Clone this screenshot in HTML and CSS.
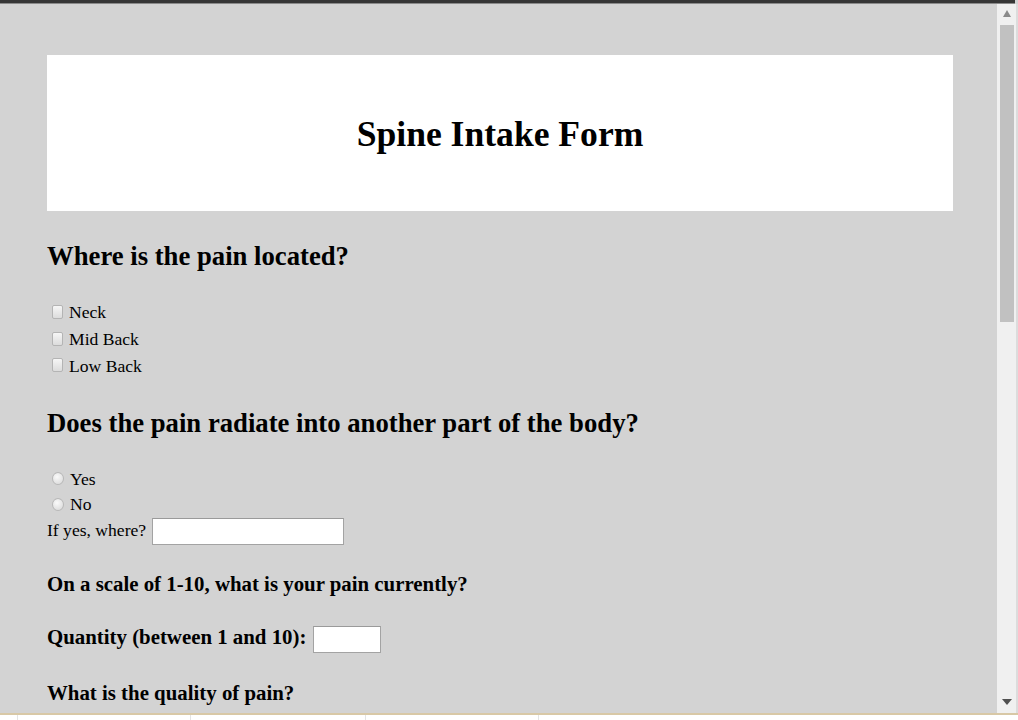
FILE: index.html
```html
<!DOCTYPE html>
<html>
<head>
<meta charset="utf-8">
<title>Spine Intake Form</title>
<link rel="stylesheet" href="styles.css">
</head>
<body>
<div class="frame">
  <div class="topbar"></div>
  <div class="viewport">
    <main class="content">
      <header class="banner"><h1>Spine Intake Form</h1></header>

      <h2 class="q q-first">Where is the pain located?</h2>
      <div class="options">
        <label class="opt"><input type="checkbox" class="box">Neck</label>
        <label class="opt"><input type="checkbox" class="box">Mid Back</label>
        <label class="opt"><input type="checkbox" class="box">Low Back</label>
      </div>

      <h2 class="q">Does the pain radiate into another part of the body?</h2>
      <div class="options tight">
        <label class="opt"><input type="radio" name="rad" class="round">Yes</label>
        <label class="opt"><input type="radio" name="rad" class="round">No</label>
        <label class="opt inline">If yes, where? <input type="text" class="field wide"></label>
      </div>

      <p class="label">On a scale of 1-10, what is your pain currently?</p>
      <label class="label row">Quantity (between 1 and 10): <input type="text" class="field small"></label>
      <p class="label">What is the quality of pain?</p>
    </main>
    <div class="scrollbar">
      <div class="arrow up"></div>
      <div class="thumb"></div>
      <div class="rest"></div>
      <div class="arrow down"></div>
    </div>
    <div class="edge"></div>
  </div>
  <div class="bottom">
    <span class="seg s1"></span><span class="seg s2"></span><span class="seg s3"></span><span class="seg s4"></span><span class="seg s5"></span>
  </div>
</div>
</body>
</html>
```

FILE: styles.css
```css
html, body {
  margin: 0;
  padding: 0;
  height: 720px;
  overflow: hidden;
  background: #d3d3d3;
  font-family: "Liberation Serif", "Times New Roman", serif;
  color: #000;
}

.frame {
  display: flex;
  flex-direction: column;
  height: 720px;
}

.topbar {
  height: 3px;
  background: #363636;
  border-bottom: 1px solid #8a8a8a;
  margin-right: 3px;
}

.viewport {
  flex: 1;
  display: flex;
  min-height: 0;
}

.content {
  flex: 1;
  overflow: hidden;
  padding: 0 44px 0 47px;
}

.banner {
  margin-top: 51px;
  height: 156px;
  background: #fff;
  display: flex;
  align-items: center;
  justify-content: center;
}

.banner h1 {
  margin: 0;
  font-size: 35.6px;
  line-height: 40px;
  font-weight: bold;
  padding-top: 2px;
}

.q {
  margin: 28px 0 0;
  font-size: 26.7px;
  line-height: 30px;
  font-weight: bold;
}

.q-first {
  margin-top: 30px;
}

.options {
  margin-top: 28.5px;
  display: flex;
  flex-direction: column;
  font-size: 17.6px;
}

.opt {
  display: flex;
  align-items: center;
  line-height: 27px;
  height: 26.8px;
  white-space: pre;
}

.tight {
  margin-top: 29px;
}

.tight .opt {
  line-height: 25.5px;
  height: 25.5px;
}

.tight .opt.inline {
  align-items: flex-start;
  height: 26.5px;
  margin-top: 0.5px;
}

.box {
  appearance: none;
  -webkit-appearance: none;
  margin: 0 6px 2px 5px;
  width: 11px;
  height: 14px;
  border: 1px solid #b4b4b4;
  border-radius: 2px;
  background: linear-gradient(#f6f6f6, #dcdcdc);
  box-sizing: border-box;
}

.round {
  appearance: none;
  -webkit-appearance: none;
  margin: 0 6px 2px 5px;
  width: 12px;
  height: 13px;
  border: 1px solid #b8b8b8;
  border-radius: 50%;
  background: radial-gradient(circle at 40% 35%, #fafafa, #d6d6d6);
  box-sizing: border-box;
}

.field {
  margin: 0 0 0 1px;
  height: 26.5px;
  box-sizing: border-box;
  border: 1px solid #a3a3a3;
  border-top-color: #9a9a9a;
  background: #fff;
  padding: 0 3px;
  font-family: "Liberation Sans", Arial, sans-serif;
  font-size: 13px;
}

.wide {
  width: 192px;
}

.small {
  width: 68.5px;
  height: 27px;
  margin-left: 1px;
}

.label {
  margin: 27.5px 0 0;
  font-size: 20.85px;
  line-height: 24px;
  font-weight: bold;
}

.row {
  display: flex;
  align-items: flex-start;
  margin-top: 28.5px;
  white-space: pre;
}

.row .field {
  margin-top: 1.5px;
}

.row + .label {
  margin-top: 27.5px;
}

.scrollbar {
  width: 19px;
  background: #f0f0f0;
  display: flex;
  flex-direction: column;
  align-items: center;
}

.arrow {
  width: 0;
  height: 0;
  border-left: 5px solid transparent;
  border-right: 5px solid transparent;
}

.arrow.up {
  margin-top: 6px;
  border-bottom: 7px solid #8a8a8a;
  border-left-width: 4px;
  border-right-width: 4px;
}

.thumb {
  margin-top: 8px;
  width: 14px;
  height: 297px;
  background: #c1c1c1;
}

.rest {
  flex: 1;
}

.arrow.down {
  margin-bottom: 8px;
  border-top: 6px solid #505050;
}

.edge {
  width: 2px;
  background: #dcdcdc;
}

.bottom {
  height: 5px;
  border-top: 2px solid #d8c8a6;
  background: #fff;
  display: flex;
}

.seg {
  border-right: 1px solid #e4e4e4;
}

.s1 { width: 17px; }
.s2 { width: 172px; }
.s3 { width: 174px; }
.s4 { width: 172px; }
.s5 { flex: 1; border-right: 0; }
```
